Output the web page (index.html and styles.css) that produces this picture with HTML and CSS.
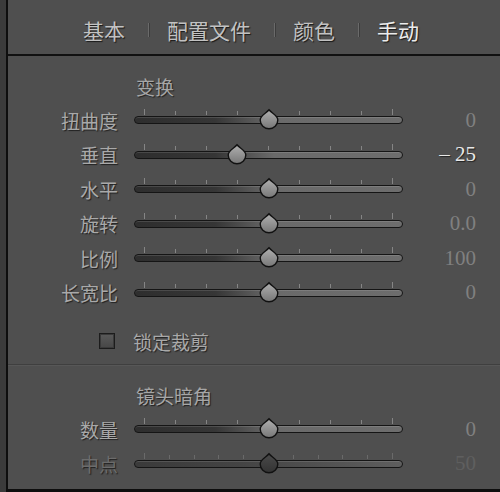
FILE: index.html
```html
<!DOCTYPE html>
<html lang="zh-CN">
<head>
  <meta charset="UTF-8">
  <title>手动 - 变换</title>
  <link rel="stylesheet" href="styles.css">
</head>
<body>
  <!-- shared gradients for the slider thumbs -->
  <svg class="defs" aria-hidden="true">
    <defs>
      <linearGradient id="thumb-fill" x1="0" y1="0" x2="0" y2="1">
        <stop offset="0" stop-color="#b0b0b0"/>
        <stop offset="1" stop-color="#777"/>
      </linearGradient>
      <linearGradient id="thumb-dim" x1="0" y1="0" x2="0" y2="1">
        <stop offset="0" stop-color="#4a4a4a"/>
        <stop offset="1" stop-color="#333"/>
      </linearGradient>
    </defs>
  </svg>

  <div class="panel">

    <!-- Tabs -->
    <nav class="tabs">
      <span class="tab">基本</span>
      <span class="tab-sep"></span>
      <span class="tab">配置文件</span>
      <span class="tab-sep"></span>
      <span class="tab">颜色</span>
      <span class="tab-sep"></span>
      <span class="tab active">手动</span>
    </nav>

    <!-- Transform -->
    <section class="section">
      <h2 class="section-title">变换</h2>

      <div class="row">
        <span class="label">扭曲度</span>
        <div class="slider">
          <div class="ticks"><i></i><i></i><i></i><i></i><i></i><i></i><i></i><i></i><i></i></div>
          <div class="track"></div>
          <svg class="thumb" style="--pos: 0.5" viewBox="0 0 20 20"><path d="M10 0.8 C12.5 4 18.8 6.5 18.8 11 A8.8 8.8 0 0 1 1.2 11 C1.2 6.5 7.5 4 10 0.8 Z"/></svg>
        </div>
        <span class="value">0</span>
      </div>

      <div class="row">
        <span class="label">垂直</span>
        <div class="slider">
          <div class="ticks"><i></i><i></i><i></i><i></i><i></i><i></i><i></i><i></i><i></i></div>
          <div class="track"></div>
          <svg class="thumb" style="--pos: 0.375" viewBox="0 0 20 20"><path d="M10 0.8 C12.5 4 18.8 6.5 18.8 11 A8.8 8.8 0 0 1 1.2 11 C1.2 6.5 7.5 4 10 0.8 Z"/></svg>
        </div>
        <span class="value changed">–&nbsp;25</span>
      </div>

      <div class="row">
        <span class="label">水平</span>
        <div class="slider">
          <div class="ticks"><i></i><i></i><i></i><i></i><i></i><i></i><i></i><i></i><i></i></div>
          <div class="track"></div>
          <svg class="thumb" style="--pos: 0.5" viewBox="0 0 20 20"><path d="M10 0.8 C12.5 4 18.8 6.5 18.8 11 A8.8 8.8 0 0 1 1.2 11 C1.2 6.5 7.5 4 10 0.8 Z"/></svg>
        </div>
        <span class="value">0</span>
      </div>

      <div class="row">
        <span class="label">旋转</span>
        <div class="slider">
          <div class="ticks"><i></i><i></i><i></i><i></i><i></i><i></i><i></i><i></i><i></i></div>
          <div class="track"></div>
          <svg class="thumb" style="--pos: 0.5" viewBox="0 0 20 20"><path d="M10 0.8 C12.5 4 18.8 6.5 18.8 11 A8.8 8.8 0 0 1 1.2 11 C1.2 6.5 7.5 4 10 0.8 Z"/></svg>
        </div>
        <span class="value">0.0</span>
      </div>

      <div class="row">
        <span class="label">比例</span>
        <div class="slider">
          <div class="ticks"><i></i><i></i><i></i><i></i><i></i><i></i><i></i><i></i><i></i></div>
          <div class="track"></div>
          <svg class="thumb" style="--pos: 0.5" viewBox="0 0 20 20"><path d="M10 0.8 C12.5 4 18.8 6.5 18.8 11 A8.8 8.8 0 0 1 1.2 11 C1.2 6.5 7.5 4 10 0.8 Z"/></svg>
        </div>
        <span class="value">100</span>
      </div>

      <div class="row">
        <span class="label">长宽比</span>
        <div class="slider">
          <div class="ticks"><i></i><i></i><i></i><i></i><i></i><i></i><i></i><i></i><i></i></div>
          <div class="track"></div>
          <svg class="thumb" style="--pos: 0.5" viewBox="0 0 20 20"><path d="M10 0.8 C12.5 4 18.8 6.5 18.8 11 A8.8 8.8 0 0 1 1.2 11 C1.2 6.5 7.5 4 10 0.8 Z"/></svg>
        </div>
        <span class="value">0</span>
      </div>

      <label class="check-row">
        <span class="checkbox"></span>
        <span class="check-label">锁定裁剪</span>
      </label>
    </section>

    <!-- Lens vignetting -->
    <section class="section second">
      <h2 class="section-title">镜头暗角</h2>

      <div class="row">
        <span class="label">数量</span>
        <div class="slider">
          <div class="ticks"><i></i><i></i><i></i><i></i><i></i><i></i><i></i><i></i><i></i></div>
          <div class="track"></div>
          <svg class="thumb" style="--pos: 0.5" viewBox="0 0 20 20"><path d="M10 0.8 C12.5 4 18.8 6.5 18.8 11 A8.8 8.8 0 0 1 1.2 11 C1.2 6.5 7.5 4 10 0.8 Z"/></svg>
        </div>
        <span class="value">0</span>
      </div>

      <div class="row disabled">
        <span class="label">中点</span>
        <div class="slider">
          <div class="ticks"><i></i><i></i><i></i><i></i><i></i><i></i><i></i><i></i><i></i><i></i><i></i></div>
          <div class="track"></div>
          <svg class="thumb" style="--pos: 0.5" viewBox="0 0 20 20"><path d="M10 0.8 C12.5 4 18.8 6.5 18.8 11 A8.8 8.8 0 0 1 1.2 11 C1.2 6.5 7.5 4 10 0.8 Z"/></svg>
        </div>
        <span class="value">50</span>
      </div>
    </section>

  </div>
</body>
</html>
```

FILE: styles.css
```css
/* Global */
body {
  margin: 0;
  height: 492px;
  overflow: hidden;
  background-color: #3b3b3b;
  font-family: "Noto Sans CJK SC", sans-serif;
}
.defs {
  display: block;
  width: 0;
  height: 0;
}
.panel {
  margin-left: 6px;
  height: 489px;
  background-color: #4f4f4f;
  border-left: 2px solid #0e0e0e;
  border-bottom: 3px solid #0e0e0e;
}

/* Tabs */
.tabs {
  display: flex;
  align-items: center;
  height: 54px;
  padding-left: 75px;
  border-bottom: 2px solid #111;
}
.tab {
  font-size: 21px;
  line-height: 24px;
  margin-top: 6px;
  color: #c2c2c2;
  text-shadow: 1px 1px 1px rgba(0, 0, 0, 0.7);
}
.tab.active {
  color: #ececec;
}
.tab-sep {
  width: 1px;
  height: 14px;
  margin: 6px 18px 0 23px;
  background-color: #6a6a6a;
  box-shadow: 1px 0 0 #3c3c3c;
}

/* Sections */
.section {
  padding: 19px 0 6px;
  border-bottom: 1px solid #3f3f3f;
}
.section.second {
  padding-top: 18px;
  border-bottom: none;
  border-top: 1px solid #575757;
}
.section-title {
  margin: 0 0 4px;
  padding-left: 128px;
  font-size: 19px;
  font-weight: normal;
  line-height: 24px;
  color: #a6a6a6;
  text-shadow: 1px 1px 1px rgba(0, 0, 0, 0.6);
}

/* Slider rows */
.row {
  display: grid;
  grid-template-columns: 110px 269px 57px;
  column-gap: 16px;
  align-items: center;
  height: 34.5px;
}
.label {
  text-align: right;
  font-size: 19px;
  color: #a9a9a9;
  text-shadow: 1px 1px 1px rgba(0, 0, 0, 0.6);
}
.value {
  text-align: right;
  font-family: "Liberation Serif", serif;
  font-size: 21px;
  color: #808080;
}
.value.changed {
  color: #e8e8e8;
  text-shadow: 1px 1px 1px rgba(0, 0, 0, 0.6);
}

.slider {
  position: relative;
  width: 269px;
  margin-top: -7px;
}
.ticks {
  display: flex;
  justify-content: space-between;
  align-items: flex-end;
  height: 6px;
  padding: 0 10px;
  margin-bottom: 1px;
}
.ticks i {
  width: 1px;
  height: 4px;
  background-color: #858585;
}
.ticks i:first-child,
.ticks i:last-child {
  height: 6px;
}
.track {
  height: 6px;
  border: 1px solid #151515;
  border-radius: 4px;
  background: linear-gradient(to right, #2e2e2e 0%, #363636 30%, #6a6a6a 52%, #6d6d6d 100%);
  box-shadow: inset 0 1px 0 rgba(255, 255, 255, 0.12);
}
.thumb {
  position: absolute;
  top: 0;
  left: calc(10px + var(--pos) * (100% - 20px) - 10px);
  width: 20px;
  height: 20px;
  overflow: visible;
}
.thumb path {
  fill: url(#thumb-fill);
  stroke: #111;
  stroke-width: 1.4;
}

/* Disabled row */
.row.disabled .label {
  color: #6c6c6c;
}
.row.disabled .value {
  color: #5f5f5f;
}
.row.disabled .ticks i {
  background-color: #6a6a6a;
}
.row.disabled .track {
  background: linear-gradient(to right, #3a3a3a 0%, #444 40%, #5e5e5e 100%);
}
.row.disabled .thumb path {
  fill: url(#thumb-dim);
}

/* Checkbox */
.check-row {
  display: flex;
  align-items: center;
  height: 34px;
  margin-top: 14px;
  padding-left: 91px;
}
.checkbox {
  width: 14px;
  height: 14px;
  border: 1px solid #1c1c1c;
  background: linear-gradient(#5a5a5a, #474747);
  box-shadow: inset 0 0 0 1px #3a3a3a;
}
.check-label {
  margin-left: 18px;
  font-size: 19px;
  color: #a9a9a9;
  text-shadow: 1px 1px 1px rgba(0, 0, 0, 0.6);
}
```
